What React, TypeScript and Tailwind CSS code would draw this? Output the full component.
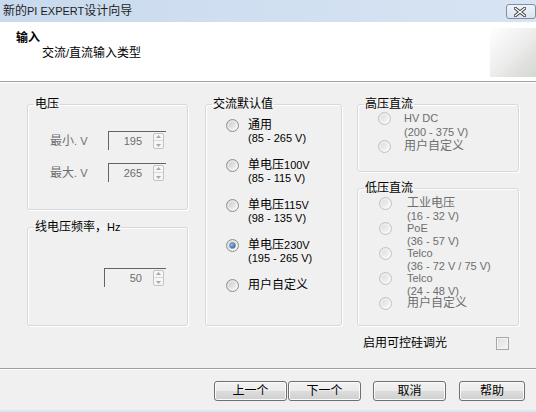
import React from 'react';

const cjk = /[\u3000-\u9fff\uff00-\uffef]/;

// CJK glyphs at 12px, latin at 11px, like the old dialog font linking
function T({ s }: { s: string }) {
  const parts: { t: string; c: boolean }[] = [];
  for (const ch of s) {
    const c = cjk.test(ch);
    const last = parts[parts.length - 1];
    if (last && last.c === c) last.t += ch;
    else parts.push({ t: ch, c });
  }
  return (
    <span>
      {parts.map((p, i) => (
        <span key={i} className={p.c ? 'text-[12px]' : 'text-[11px]'}>
          {p.t}
        </span>
      ))}
    </span>
  );
}

const Radio = ({ checked = false, disabled = false }: { checked?: boolean; disabled?: boolean }) => (
  <span
    className={`flex h-[13px] w-[13px] shrink-0 items-center justify-center rounded-full border ${
      disabled
        ? 'border-[#c2c2c2] bg-[radial-gradient(circle_at_65%_65%,#ffffff,#e2e2e2)]'
        : 'border-[#8e8f8f] bg-[radial-gradient(circle_at_65%_65%,#ffffff,#d2d2d2)]'
    }`}
  >
    {checked ? (
      <span className="h-[7px] w-[7px] rounded-full border border-[#6b8bb3] bg-[radial-gradient(circle_at_35%_35%,#9dc1e8,#1c4d86)]" />
    ) : (
      <span
        className={`h-[7px] w-[7px] rounded-full ${
          disabled ? 'bg-[linear-gradient(135deg,#dedede,#f4f4f4)]' : 'bg-[linear-gradient(135deg,#cfcfcf,#f0f0f0)]'
        }`}
      />
    )}
  </span>
);

const Spin = ({ value, w }: { value: string; w: string }) => (
  <div className={`flex h-[19px] items-center border-t border-l border-[#646464] ${w}`}>
    <span className="flex-1 pr-[11px] text-right leading-[17px] text-[#6d6d6d]">
      <T s={value} />
    </span>
    <span className="mr-[2px] flex h-[16px] w-[11px] flex-col items-center justify-around rounded-[2px] border border-[#c4c4c4] bg-[#f6f6f6]">
      <svg width="5" height="3" viewBox="0 0 5 3">
        <path d="M0 3 L2.5 0 L5 3 Z" fill="#a8a8a8" />
      </svg>
      <span className="h-px w-[9px] bg-[#dadada]" />
      <svg width="5" height="3" viewBox="0 0 5 3">
        <path d="M0 0 L2.5 3 L5 0 Z" fill="#a8a8a8" />
      </svg>
    </span>
  </div>
);

const Group = ({ title, className, children }: { title: string; className: string; children: React.ReactNode }) => (
  <fieldset className={`rounded-[3px] border border-[#d5d9dd] shadow-[inset_1px_1px_0_#ffffff,1px_1px_0_#ffffff] ${className}`}>
    <legend className="ml-[6px] px-[1px] leading-[14px] text-black">
      <T s={title} />
    </legend>
    {children}
  </fieldset>
);

const Button = ({ label, w }: { label: string; w: string }) => (
  <button
    className={`h-[20px] rounded-[3px] border border-[#707070] bg-[linear-gradient(#f2f2f2,#ebebeb_50%,#dddddd_50%,#cfcfcf)] leading-[18px] text-black shadow-[inset_0_0_0_1px_#fbfbfb] ${w}`}
  >
    <T s={label} />
  </button>
);

const acItems = [
  { l1: '通用', l2: '(85 - 265 V)' },
  { l1: '单电压100V', l2: '(85 - 115 V)' },
  { l1: '单电压115V', l2: '(98 - 135 V)' },
  { l1: '单电压230V', l2: '(195 - 265 V)', checked: true },
  { l1: '用户自定义' },
];

const lowDc = [
  { l1: '工业电压', l2: '(16 - 32 V)' },
  { l1: 'PoE', l2: '(36 - 57 V)' },
  { l1: 'Telco', l2: '(36 - 72 V / 75 V)' },
  { l1: 'Telco', l2: '(24 - 48 V)' },
  { l1: '用户自定义' },
];

export default function App() {
  return (
    <div
      className="flex h-[412px] w-[536px] flex-col overflow-hidden bg-[#f0f0f0] text-[12px] text-black"
      style={{ fontFamily: '"Liberation Sans", "Noto Sans CJK SC", sans-serif' }}
    >
      {/* title bar */}
      <div className="flex h-[22px] shrink-0 items-start justify-between bg-[linear-gradient(90deg,#c9daee,#d7e4f3)]">
        <div className="pl-[3px] leading-[22px] text-[#1e1e1e]">
          <T s="新的PI EXPERT设计向导" />
        </div>
        <div className="mt-[4px] flex h-[15px] w-[30px] shrink-0 items-center rounded-[3px] border border-[#7f8ea3] bg-[linear-gradient(#eef3f9,#dbe4ef)] pl-[7px]">
          <svg width="12" height="10" viewBox="0 0 12 10">
            <path d="M1.5 1.5 L10.5 8.5 M10.5 1.5 L1.5 8.5" stroke="#3b3b3b" strokeWidth="3.2" strokeLinecap="square" />
            <path d="M1.5 1.5 L10.5 8.5 M10.5 1.5 L1.5 8.5" stroke="#ffffff" strokeWidth="1.4" strokeLinecap="square" />
          </svg>
        </div>
      </div>

      {/* header */}
      <div className="flex h-[59px] shrink-0 justify-between bg-white">
        <div className="pt-[9px] leading-[14px]">
          <div className="pl-[16px] font-bold">
            <T s="输入" />
          </div>
          <div className="pl-[42px] pt-[1px]">
            <T s="交流/直流输入类型" />
          </div>
        </div>
        <div className="mt-[6px] h-[49px] w-[46px] bg-[linear-gradient(135deg,#ffffff,#efefef_45%,#dedfdc_80%,#d3dace)]" />
      </div>
      <div className="h-px shrink-0 bg-[#a0a0a0]" />
      <div className="h-px shrink-0 bg-white" />

      {/* body */}
      <div className="flex h-[285px] shrink-0 items-start pl-[27px] pt-[14px]">
        {/* column 1 */}
        <div className="flex h-[229px] w-[161px] flex-col gap-[10px]">
          <Group title="电压" className="h-[113px]">
            <div className="flex flex-col gap-[13px] pl-[22px] pr-[21px] pt-[20px]">
              <div className="flex items-center justify-between text-[#6d6d6d]">
                <T s="最小. V" />
                <Spin value="195" w="w-[58px]" />
              </div>
              <div className="flex items-center justify-between text-[#6d6d6d]">
                <T s="最大. V" />
                <Spin value="265" w="w-[58px]" />
              </div>
            </div>
          </Group>
          <Group title="线电压频率，Hz" className="flex-1">
            <div className="flex justify-end pr-[21px] pt-[34px]">
              <Spin value="50" w="w-[62px]" />
            </div>
          </Group>
        </div>

        {/* column 2 */}
        <Group title="交流默认值" className="ml-[17px] h-[229px] w-[137px]">
          <div className="flex flex-col gap-[14px] pl-[20px] pt-[8px] leading-[13px]">
            {acItems.map((it, i) => (
              <div key={i} className="flex items-start gap-[9px]">
                <Radio checked={it.checked} />
                <div>
                  <div>
                    <T s={it.l1} />
                  </div>
                  {it.l2 && (
                    <div>
                      <T s={it.l2} />
                    </div>
                  )}
                </div>
              </div>
            ))}
          </div>
        </Group>

        {/* column 3 */}
        <div className="ml-[15px] flex w-[162px] flex-col">
          <div className="flex h-[229px] flex-col gap-[9px]">
            <Group title="高压直流" className="h-[75px]">
              <div className="flex flex-col pl-[20px] leading-[14px] text-[#6d6d6d]">
                <div className="flex items-start gap-[13px]">
                  <span className="mt-[1px]">
                    <Radio disabled />
                  </span>
                  <div>
                    <div>
                      <T s="HV DC" />
                    </div>
                    <div>
                      <T s="(200 - 375 V)" />
                    </div>
                  </div>
                </div>
                <div className="flex items-start gap-[13px]">
                  <span className="mt-[1px]">
                    <Radio disabled />
                  </span>
                  <T s="用户自定义" />
                </div>
              </div>
            </Group>
            <Group title="低压直流" className="flex-1">
              <div className="flex flex-col pl-[21px] pt-[2px] leading-[12.5px] text-[#6d6d6d]">
                {lowDc.map((it, i) => (
                  <div key={i} className="flex items-start gap-[15px]">
                    <Radio disabled />
                    <div>
                      <div>
                        <T s={it.l1} />
                      </div>
                      {it.l2 && (
                        <div>
                          <T s={it.l2} />
                        </div>
                      )}
                    </div>
                  </div>
                ))}
              </div>
            </Group>
          </div>
          <div className="mt-[10px] flex items-center justify-between pl-[6px] pr-[10px] leading-[14px]">
            <T s="启用可控硅调光" />
            <span className="h-[13px] w-[13px] border border-[#a6a6a6] bg-[linear-gradient(135deg,#dcdcdc,#f7f7f7)] shadow-[inset_0_0_0_1px_#f4f4f4]" />
          </div>
        </div>
      </div>

      {/* footer */}
      <div className="h-px shrink-0 bg-[#a0a0a0]" />
      <div className="h-px shrink-0 bg-white" />
      <div className="flex shrink-0 justify-end pr-[11px] pt-[11px] pb-[9px]">
        <Button label="上一个" w="w-[73px]" />
        <span className="ml-[1px]">
          <Button label="下一个" w="w-[73px]" />
        </span>
        <span className="ml-[12px]">
          <Button label="取消" w="w-[73px]" />
        </span>
        <span className="ml-[13px]">
          <Button label="帮助" w="w-[66px]" />
        </span>
      </div>
      <div className="h-[2px] shrink-0 bg-[#dbe6f3]" />
    </div>
  );
}
